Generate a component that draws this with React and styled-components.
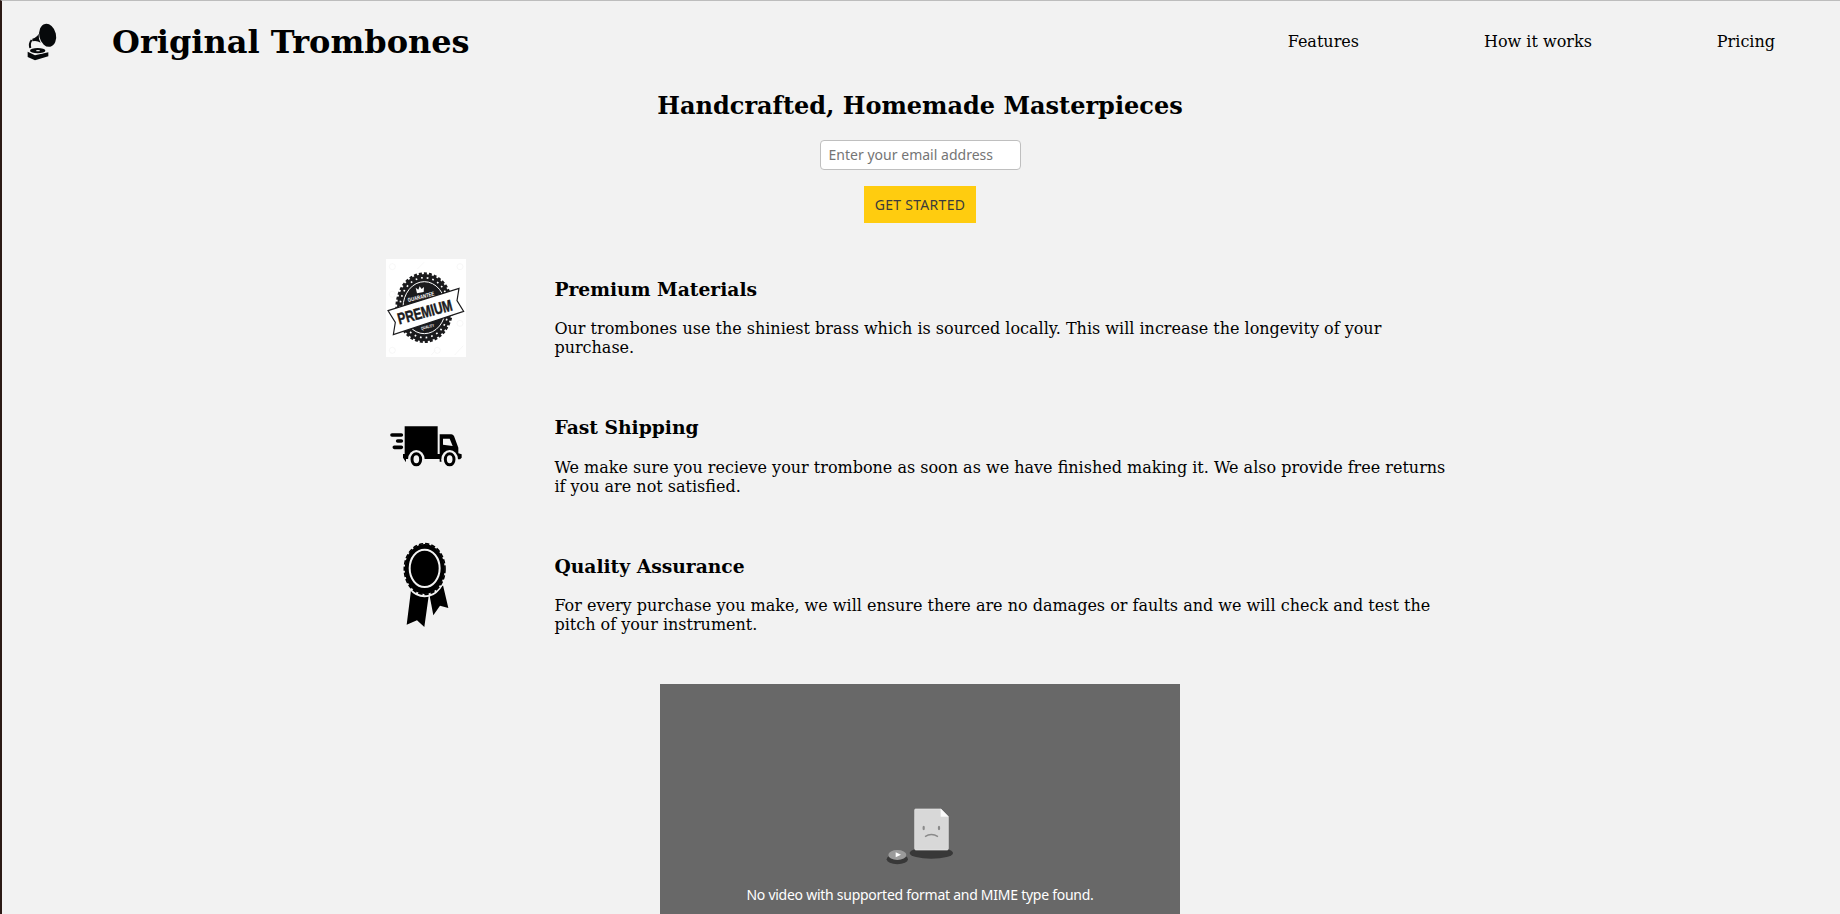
import React from "react";
import styled, { createGlobalStyle } from "styled-components";

const GlobalStyle = createGlobalStyle`
  * { box-sizing: border-box; }
  body { margin: 0; background: #f2f2f2; overflow: hidden; }
`;

const UI_FONT = `"Noto Sans", "Open Sans", sans-serif`;

const Page = styled.div`
  height: 914px;
  overflow: hidden;
  border-top: 1px solid #bdbdbd;
  border-left: 2px solid #2c1a15;
  padding-right: 2px;
  background: #f2f2f2;
  color: #000;
  font-family: "DejaVu Serif", serif;
  font-size: 16px;
`;

const Header = styled.header`
  display: flex;
  align-items: center;
  height: 81px;
  padding: 0 63px 0 13px;
`;

const Logo = styled.svg`
  width: 60px;
  height: 60px;
  margin-right: 37px;
`;

const Brand = styled.h1`
  margin: 2px 0 0;
  font-size: 32px;
  line-height: 37px;
`;

const Nav = styled.nav`
  display: flex;
  gap: 125px;
  margin-left: auto;
`;

const NavLink = styled.a`
  color: #000;
  line-height: 19px;
`;

const Hero = styled.section`
  display: flex;
  flex-direction: column;
  align-items: center;
  padding-top: 10px;
`;

const Tagline = styled.h2`
  margin: 0 0 20px;
  font-size: 24px;
  line-height: 28px;
`;

const EmailInput = styled.input`
  width: 201px;
  height: 30px;
  margin-bottom: 16px;
  padding: 0 8px 2px;
  border: 1px solid #bfbfbf;
  border-radius: 4px;
  background: #fff;
  font: 14px ${UI_FONT};
  letter-spacing: 0.02px;
  &::placeholder { color: #757575; opacity: 1; }
`;

const StartButton = styled.button`
  width: 112px;
  height: 37px;
  padding: 0;
  border: 0;
  background: #ffcc0f;
  color: #3b3b3b;
  font: 14px ${UI_FONT};
  letter-spacing: 0.3px;
  white-space: nowrap;
`;

const Features = styled.section`
  width: 1072px;
  margin: 36px 0 9.2px 384px;
`;

const Feature = styled.article`
  display: flex;
  height: 138.6px;
`;

const FeatureIcon = styled.svg`
  flex: none;
  width: 80px;
  height: 100px;
  margin-right: 88.4px;
`;

const FeatureBody = styled.div`
  padding-top: 18.7px;
`;

const FeatureTitle = styled.h3`
  margin: 0 0 19.3px;
  font-size: 18.72px;
  line-height: 22px;
`;

const FeatureText = styled.p`
  width: 903px;
  margin: 0;
  line-height: 19px;
`;

const Video = styled.div`
  display: flex;
  flex-direction: column;
  align-items: center;
  width: 520px;
  height: 300px;
  margin: 0 auto;
  padding-top: 106px;
  background: #686868;
`;

const SadFile = styled.svg`
  width: 100px;
  height: 90px;
`;

const VideoMessage = styled.p`
  margin: 5px 0 0;
  color: #fff;
  font: 14px/20px ${UI_FONT};
  letter-spacing: -0.26px;
  white-space: nowrap;
`;

const SealText = styled.text`
  font-family: "Liberation Sans", sans-serif;
  font-weight: 700;
  text-anchor: middle;
`;

const PremiumIcon = () => (
  <FeatureIcon viewBox="48 42 240 300">
    <rect x="48" y="42" width="240" height="294" fill="#fff" />
    <g fill="none" stroke="#f3f3f3" strokeWidth="2">
      <circle cx="67" cy="65" r="9" /><circle cx="270" cy="65" r="9" />
      <circle cx="67" cy="148" r="9" /><circle cx="270" cy="235" r="9" />
      <circle cx="67" cy="316" r="9" /><circle cx="202" cy="316" r="9" />
      <path d="M254 330l26-28M142 72l20-20M184 330l12-14" />
    </g>
    <ellipse cx="163" cy="188" rx="82" ry="101" fill="#1b1b1d" />
    <ellipse cx="163" cy="188" rx="83" ry="102" fill="none" stroke="#1b1b1d" strokeWidth="8" strokeDasharray="9 6" />
    <ellipse cx="163" cy="188" rx="73" ry="90" fill="none" stroke="#fff" strokeWidth="5" strokeDasharray="5 12" />
    <ellipse cx="163" cy="188" rx="64" ry="78" fill="none" stroke="#fff" strokeWidth="3" />
    <path d="M137 128l8 6 4-10 6 8 7-6-1 15-20 4z" fill="#fff" />
    <path d="M54 197L267 130L261 167L281 199L70 269L76 232Z" fill="#fff" stroke="#1b1b1d" strokeWidth="3.5" />
    <SealText transform="translate(154 161) rotate(-14) scale(0.76 1)" fill="#fff" fontSize="17">GUARANTEE</SealText>
    <SealText transform="translate(174 250) rotate(-14) scale(0.7 1)" fill="#fff" fontSize="13">QUALITY</SealText>
    <SealText transform="translate(169 217) rotate(-15) scale(0.74 1)" fill="#1b1b1d" stroke="#1b1b1d" strokeWidth="1.5" fontSize="48">PREMIUM</SealText>
  </FeatureIcon>
);

const TruckIcon = () => (
  <FeatureIcon viewBox="33 -21 240 300">
    <g stroke="#000" strokeWidth="11" strokeLinecap="round">
      <path d="M51 90h28M68 108h11M58 127h21" />
    </g>
    <path d="M89 64H188V162H89Z" />
    <path d="M194 88H229Q234 88 237 93L250 128V145L260 148V158L255 163H194Z" />
    <path d="M204 101H224L233 123L204 119Z" fill="#f2f2f2" />
    <path d="M84 147H150V162H93V172L84 158ZM148 147H200V170H194V162H148Z" />
    <ellipse cx="124" cy="163" rx="25" ry="28" fill="#f2f2f2" />
    <ellipse cx="224" cy="163" rx="25" ry="28" fill="#f2f2f2" />
    <ellipse cx="124" cy="163" rx="13" ry="16.5" fill="none" stroke="#000" strokeWidth="9" />
    <ellipse cx="224" cy="163" rx="13" ry="16.5" fill="none" stroke="#000" strokeWidth="9" />
  </FeatureIcon>
);

const RibbonIcon = () => (
  <FeatureIcon viewBox="3 18 240 300">
    <path d="M78 181L131 198L118 291L96 271L65 284Z" />
    <path d="M134 198L174 166L190 234L165 227L145 256Z" />
    <ellipse cx="119" cy="118" rx="62" ry="80" fill="#f2f2f2" stroke="#f2f2f2" strokeWidth="8" />
    <ellipse cx="119" cy="117" rx="60" ry="75" />
    <ellipse cx="119" cy="117" rx="61" ry="76" fill="none" stroke="#000" strokeWidth="5" strokeDasharray="13 6" />
    <ellipse cx="119" cy="115" rx="45" ry="56" fill="none" stroke="#f2f2f2" strokeWidth="6" />
  </FeatureIcon>
);

const features = [
  {
    Icon: PremiumIcon,
    title: "Premium Materials",
    text: "Our trombones use the shiniest brass which is sourced locally. This will increase the longevity of your purchase.",
  },
  {
    Icon: TruckIcon,
    title: "Fast Shipping",
    text: "We make sure you recieve your trombone as soon as we have finished making it. We also provide free returns if you are not satisfied.",
  },
  {
    Icon: RibbonIcon,
    title: "Quality Assurance",
    text: "For every purchase you make, we will ensure there are no damages or faults and we will check and test the pitch of your instrument.",
  },
];

export default function App() {
  return (
    <Page>
      <GlobalStyle />
      <Header>
        <Logo viewBox="0 0 180 180" fill="#07090b">
          <ellipse cx="98" cy="70" rx="25" ry="35" transform="rotate(-13 98 70)" />
          <path d="M52 80Q66 76 71 65Q70 80 77 92Q66 85 52 88Z" />
          <path d="M50 84Q42 94 46 108" fill="none" stroke="#07090b" strokeWidth="6" />
          <path d="M38 119L60 130L100 121V133L60 145L38 135Z" />
          <ellipse cx="68" cy="116" rx="25" ry="9.5" fill="#f2f2f2" />
          <ellipse cx="68" cy="116" rx="23" ry="8" />
          <ellipse cx="69" cy="116" rx="6" ry="2" fill="#f2f2f2" />
        </Logo>
        <Brand>Original Trombones</Brand>
        <Nav>
          <NavLink>Features</NavLink>
          <NavLink>How it works</NavLink>
          <NavLink>Pricing</NavLink>
        </Nav>
      </Header>
      <Hero>
        <Tagline>Handcrafted, Homemade Masterpieces</Tagline>
        <EmailInput type="email" placeholder="Enter your email address" />
        <StartButton>GET STARTED</StartButton>
      </Hero>
      <Features>
        {features.map(({ Icon, title, text }) => (
          <Feature key={title}>
            <Icon />
            <FeatureBody>
              <FeatureTitle>{title}</FeatureTitle>
              <FeatureText>{text}</FeatureText>
            </FeatureBody>
          </Feature>
        ))}
      </Features>
      <Video>
        <SadFile viewBox="0 0 300 270">
          <ellipse cx="184" cy="189" rx="65" ry="17" fill="#383838" />
          <path d="M137 57H213L235 80V176Q235 180 231 180H138Q134 180 134 176V60Q134 57 137 57Z" fill="#d8d8d8" stroke="#e8e8e8" strokeWidth="2" />
          <path d="M212 56L236 80H212Z" fill="#fafafa" />
          <ellipse cx="161" cy="114" rx="3.5" ry="7" fill="#8a8a8a" />
          <ellipse cx="207" cy="114" rx="3.5" ry="7" fill="#8a8a8a" />
          <path d="M165 140Q184 127 204 140" fill="none" stroke="#8a8a8a" strokeWidth="4" />
          <ellipse cx="82" cy="208" rx="32" ry="15" fill="#383838" />
          <ellipse cx="82" cy="195" rx="27" ry="15" fill="#9b9b9b" />
          <path d="M77 187L93 194L77 202Z" fill="#fff" />
        </SadFile>
        <VideoMessage>No video with supported format and MIME type found.</VideoMessage>
      </Video>
    </Page>
  );
}
